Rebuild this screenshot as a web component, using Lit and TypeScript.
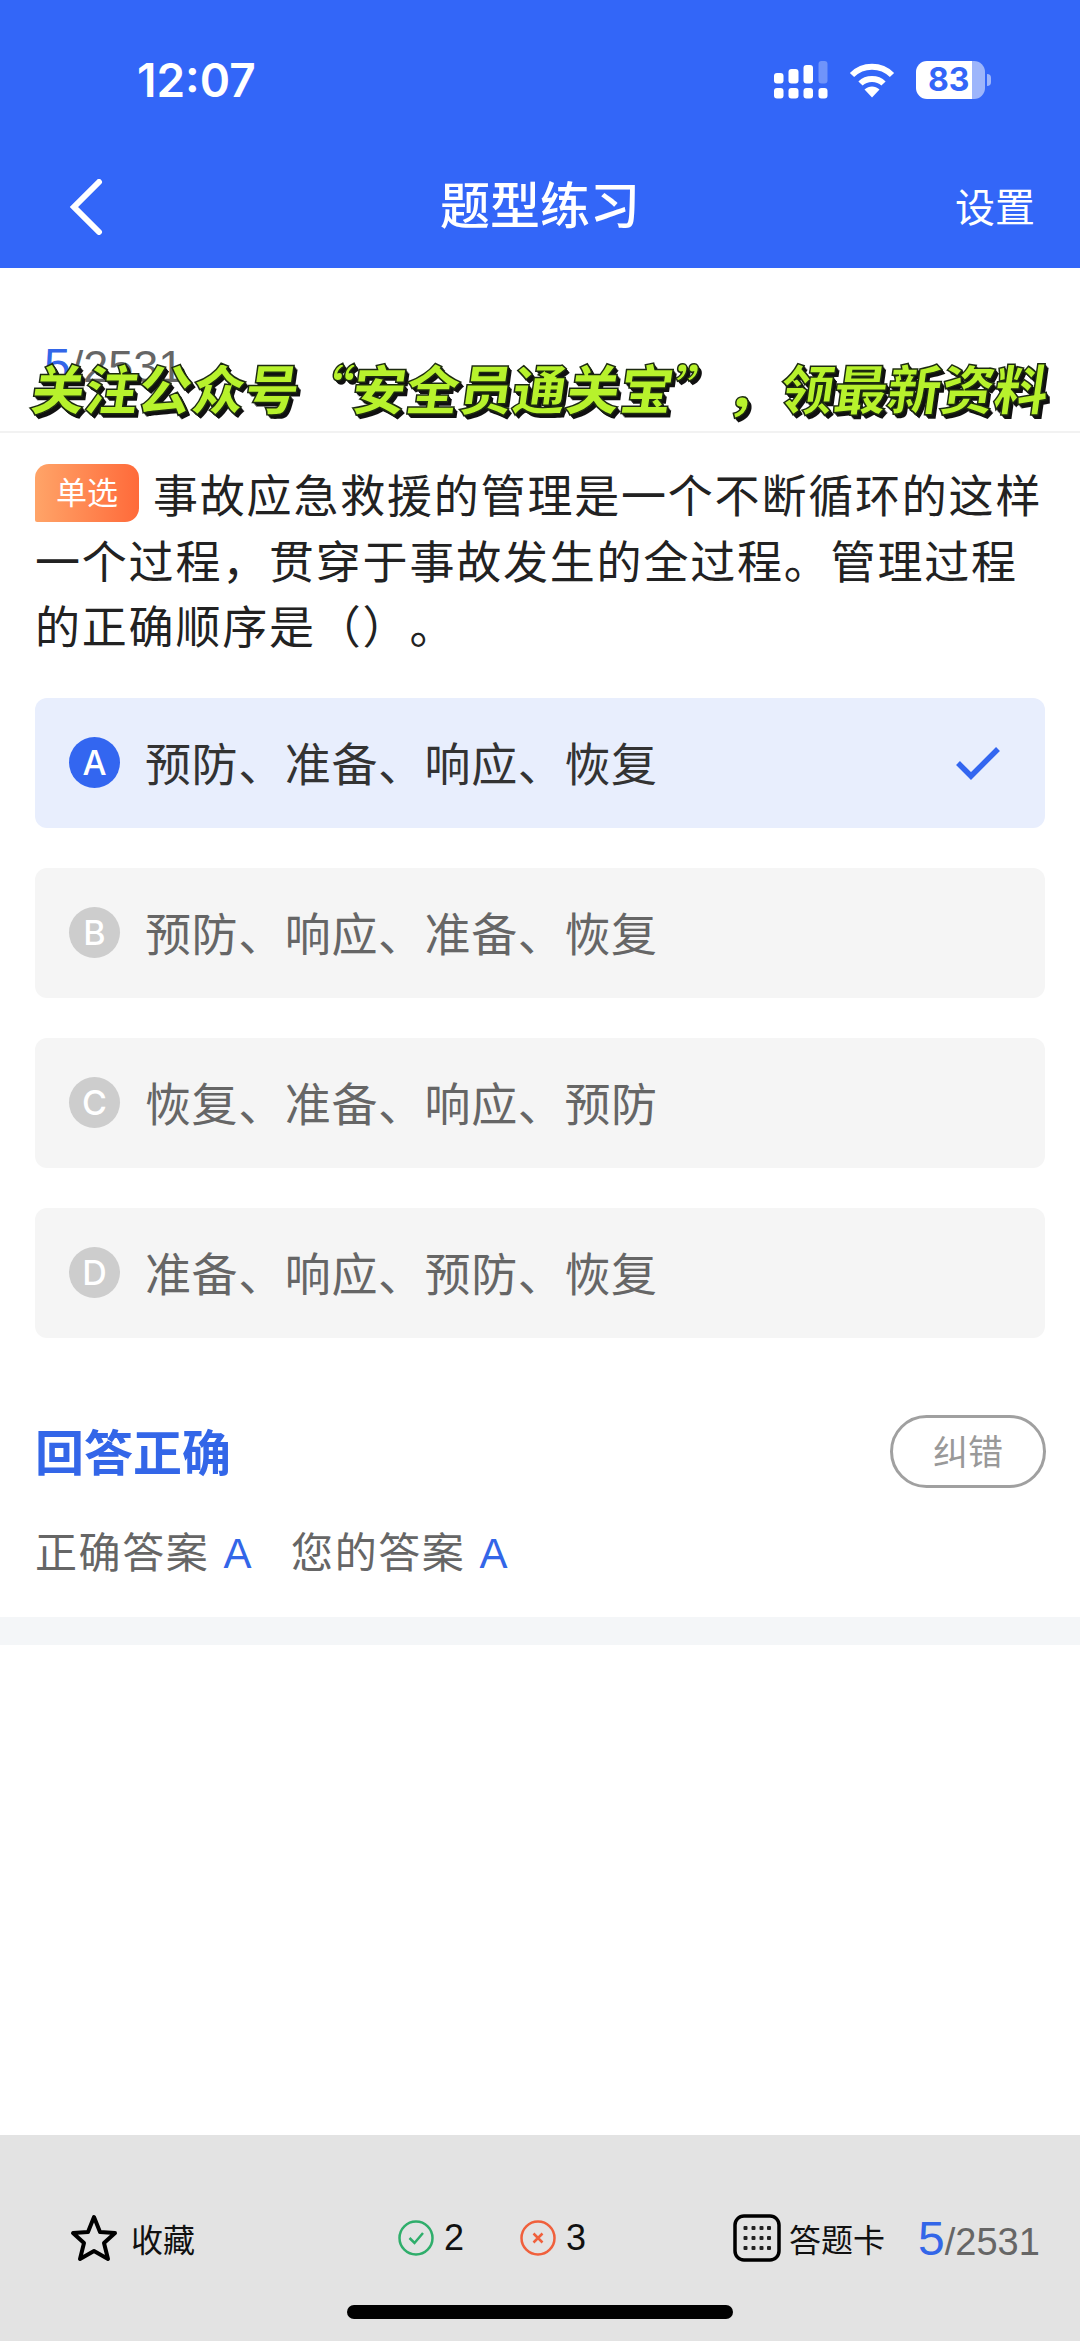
import { LitElement, css, html, svg } from "lit";
import { customElement } from "lit/decorators.js";

const options = [
  { key: "A", text: "预防、准备、响应、恢复", on: true },
  { key: "B", text: "预防、响应、准备、恢复", on: false },
  { key: "C", text: "恢复、准备、响应、预防", on: false },
  { key: "D", text: "准备、响应、预防、恢复", on: false },
];

const signal = svg`<svg class="sig" width="54" height="38" viewBox="0 0 54 38">
  <rect x="0" y="12" width="9.5" height="10.5" rx="3" fill="#fff"/>
  <rect x="14.5" y="8" width="10" height="14.5" rx="3" fill="#fff"/>
  <rect x="29.5" y="4" width="9.5" height="18.5" rx="3" fill="#fff"/>
  <rect x="44.5" y="0" width="9" height="22.5" rx="3" fill="#fff" fill-opacity=".3"/>
  <rect x="0" y="27" width="9.5" height="10.5" rx="3" fill="#fff"/>
  <rect x="14.5" y="27" width="10" height="10.5" rx="3" fill="#fff"/>
  <rect x="29.5" y="27" width="9.5" height="10.5" rx="3" fill="#fff"/>
  <rect x="44.5" y="27" width="9" height="10.5" rx="3" fill="#fff"/>
</svg>`;

const wifi = svg`<svg width="46" height="36" viewBox="0 0 46 36" fill="none" stroke="#fff" stroke-width="6">
  <path d="M3 13C14 2 32 2 43 13"/>
  <path d="M11.5 21.5C17.5 15.5 28.5 15.5 34.5 21.5"/>
  <path d="M15.5 27.5L23 35.5L30.5 27.5C26 23.5 20 23.5 15.5 27.5Z" fill="#fff" stroke="none"/>
</svg>`;

@customElement("app-root")
export class AppRoot extends LitElement {
  render() {
    return html`
      <header class="top">
        <div class="status">
          <span class="time">12:07</span>
          <div class="status-icons">
            ${signal} ${wifi}
            <div class="battery"><span>83</span></div>
            <i class="nub"></i>
          </div>
        </div>
        <nav class="nav">
          <svg class="back" width="36" height="56" viewBox="0 0 36 56" fill="none" stroke="#fff" stroke-width="6" stroke-linecap="round">
            <path d="M31 3L6 28L31 53"/>
          </svg>
          <span class="title">题型练习</span>
          <span class="settings">设置</span>
        </nav>
      </header>

      <section class="progress">
        <span class="count head"><b>5</b>/2531</span>
        <div class="banner">关注公众号“安全员通关宝”，领最新资料</div>
      </section>

      <main class="body">
        <p class="question">
          <span class="tag">单选</span>事故应急救援的管理是一个不断循环的这样一个过程，贯穿于事故发生的全过程。管理过程的正确顺序是（）。
        </p>
        <div class="options">
          ${options.map(
            (o) => html`
              <div class="option ${o.on ? "on" : ""}">
                <span class="letter">${o.key}</span>
                <span class="opt-text">${o.text}</span>
                ${o.on
                  ? html`<svg class="tick" width="46" height="36" viewBox="0 0 46 36" fill="none" stroke="#3366f0" stroke-width="5.5">
                      <path d="M3 18L16 31L43 4"/>
                    </svg>`
                  : ""}
              </div>
            `
          )}
        </div>
        <div class="result">
          <span class="verdict">回答正确</span>
          <span class="report">纠错</span>
        </div>
        <div class="answers">
          <span>正确答案 <em>A</em></span>
          <span>您的答案 <em>A</em></span>
        </div>
      </main>
      <div class="band"></div>
      <div class="spacer"></div>

      <footer class="bottom">
        <div class="tools">
          <div class="fav">
            <svg width="48" height="48" viewBox="0 0 48 48" fill="none" stroke="#000" stroke-width="4" stroke-linejoin="round">
              <path d="M24 3L30 18L45 19L34 29L38 45L24 37L10 45L14 29L3 19L18 18Z"/>
            </svg>
            <span>收藏</span>
          </div>
          <div class="score">
            <svg width="36" height="36" viewBox="0 0 36 36" fill="none" stroke="#2fae6b" stroke-width="2.5">
              <circle cx="18" cy="18" r="16.5"/>
              <path d="M11.5 18L16.5 23L25 13"/>
            </svg>
            <span>2</span>
          </div>
          <div class="score wrong">
            <svg width="36" height="36" viewBox="0 0 36 36" fill="none" stroke="#f0603c" stroke-width="2.5">
              <circle cx="18" cy="18" r="16.5"/>
              <path d="M13.5 13.5L22.5 22.5M22.5 13.5L13.5 22.5"/>
            </svg>
            <span>3</span>
          </div>
          <div class="card">
            <svg width="48" height="48" viewBox="0 0 48 48" fill="none">
              <rect x="2" y="2" width="44" height="44" rx="9" stroke="#000" stroke-width="3.5"/>
              <g fill="#222">
                ${[14, 24, 34].map((y) =>
                  [12.5, 20.5, 28.5, 36].map((x) => svg`<rect x=${x - 2} y=${y - 2} width="4" height="4" rx="1"/>`)
                )}
              </g>
            </svg>
            <span>答题卡</span>
          </div>
          <span class="count foot"><b>5</b>/2531</span>
        </div>
        <div class="home"></div>
      </footer>
    `;
  }

  static styles = css`
    :host {
      display: flex;
      flex-direction: column;
      width: 1080px;
      height: 2341px;
      background: #fff;
      font-family: "Noto Sans CJK SC", "Noto Sans", sans-serif;
      overflow: hidden;
      text-spacing-trim: space-all;
    }
    .top {
      height: 268px;
      background: #3366f8;
      color: #fff;
      box-sizing: border-box;
      padding-top: 50px;
      flex: none;
    }
    .status {
      height: 60px;
      display: flex;
      align-items: center;
      justify-content: space-between;
      padding: 0 89px 0 137px;
    }
    .time {
      font-family: Inter, sans-serif;
      font-weight: 600;
      font-size: 46px;
    }
    .status-icons {
      display: flex;
      align-items: center;
      gap: 21px;
    }
    .battery {
      width: 69px;
      height: 38px;
      border-radius: 11px;
      background: linear-gradient(90deg, #fff 81%, #9db5fb 81%);
      color: #3366f8;
      font-family: Inter, sans-serif;
      font-weight: 700;
      font-size: 32px;
      line-height: 38px;
      padding-left: 12px;
      box-sizing: border-box;
    }
    .nub {
      width: 4px;
      height: 12px;
      border-radius: 0 4px 4px 0;
      background: #9db5fb;
      margin-left: -19px;
    }
    .nav {
      height: 90px;
      margin-top: 50px;
      display: grid;
      grid-template-columns: 1fr auto 1fr;
      align-items: center;
      padding: 0 45px;
    }
    .back {
      margin: 3px 0 0 23px;
    }
    .title {
      font-size: 50px;
      font-weight: 500;
      margin-bottom: 6px;
    }
    .settings {
      justify-self: end;
      font-size: 40px;
    }
    .progress {
      position: relative;
      flex: none;
      height: 165px;
      box-sizing: border-box;
      border-bottom: 2px solid #f2f2f2;
      padding: 70px 0 0 44px;
    }
    .count {
      font-family: "Liberation Sans", sans-serif;
      font-size: 37px;
      color: #666;
    }
    .count.head {
      font-size: 45px;
    }
    .count b {
      font-weight: 400;
      font-size: 48px;
      color: #3366e8;
    }
    .banner {
      position: absolute;
      left: 32px;
      top: 87px;
      white-space: nowrap;
      font-size: 54px;
      letter-spacing: -0.5px;
      line-height: 64px;
      font-weight: 900;
      transform: skewX(-8deg);
      color: #b7f22c;
      -webkit-text-stroke: 1.5px #1c2a10;
      text-shadow: 1px 1px 0 #111, 2px 2px 0 #111, 3px 3px 0 #111, 4px 4px 0 #111;
    }
    .body {
      padding: 0 35px;
      flex: none;
    }
    .question {
      margin: 28px 0 0;
      font-size: 45px;
      line-height: 65.5px;
      letter-spacing: 1.8px;
      color: #222;
    }
    .tag {
      display: inline-block;
      width: 104px;
      height: 58px;
      line-height: 54px;
      margin-right: 14px;
      text-align: center;
      vertical-align: 9px;
      border-radius: 14px 14px 14px 2px;
      background: linear-gradient(90deg, #ffa468, #ff6a3a);
      color: #fff;
      font-size: 31px;
      letter-spacing: 0;
    }
    .options {
      display: flex;
      flex-direction: column;
      gap: 40px;
      margin-top: 40px;
    }
    .option {
      height: 130px;
      display: flex;
      align-items: center;
      padding: 0 34px;
      border-radius: 12px;
      background: #f5f5f5;
      color: #666;
    }
    .option.on {
      background: #e8eefd;
      color: #333;
    }
    .letter {
      width: 51px;
      height: 51px;
      flex: none;
      border-radius: 50%;
      background: #cdcdcd;
      color: #fff;
      text-align: center;
      line-height: 51px;
      font-family: Inter, sans-serif;
      font-weight: 500;
      font-size: 34px;
    }
    .on .letter {
      background: #3366f0;
    }
    .opt-text {
      margin: 0 0 3px 25px;
      font-size: 46px;
      letter-spacing: 0.6px;
      flex: 1;
    }
    .tick {
      margin-right: 10px;
    }
    .result {
      display: flex;
      align-items: center;
      justify-content: space-between;
      margin-top: 76px;
    }
    .verdict {
      font-size: 49px;
      font-weight: 700;
      color: #3366e8;
      margin-bottom: 4px;
    }
    .report {
      width: 156px;
      height: 73px;
      box-sizing: border-box;
      border: 3px solid #a0a0a0;
      border-radius: 37px;
      text-align: center;
      line-height: 64px;
      font-size: 35px;
      color: #999;
      margin-right: -1px;
    }
    .answers {
      display: flex;
      gap: 38px;
      margin-top: 30px;
      font-size: 42px;
      letter-spacing: 1.6px;
      color: #666;
    }
    .answers em {
      font-style: normal;
      font-family: "Liberation Sans", sans-serif;
      color: #3366e8;
      margin-left: 3px;
    }
    .band {
      flex: none;
      height: 28px;
      margin-top: 37px;
      background: #f4f6f8;
    }
    .spacer {
      flex: 1;
    }
    .bottom {
      flex: none;
      height: 206px;
      background: #e3e3e3;
      display: flex;
      flex-direction: column;
      align-items: center;
    }
    .tools {
      align-self: stretch;
      height: 170px;
      box-sizing: border-box;
      padding: 36px 38px 0 70px;
      display: flex;
      align-items: center;
      font-size: 32px;
      color: #111;
      white-space: nowrap;
    }
    .fav,
    .score,
    .card {
      display: flex;
      align-items: center;
    }
    .fav span {
      margin-left: 13px;
    }
    .score {
      margin-left: 203px;
      gap: 10px;
      font-family: "Liberation Sans", sans-serif;
      font-size: 36px;
    }
    .score.wrong {
      margin-left: 56px;
    }
    .card {
      margin-left: 147px;
      gap: 8px;
    }
    .count.foot {
      margin-left: 33px;
      font-size: 38px;
    }
    .home {
      width: 386px;
      height: 14px;
      border-radius: 7px;
      background: #000;
    }
    svg {
      flex: none;
      display: block;
    }
  `;
}

declare global {
  interface HTMLElementTagNameMap {
    "app-root": AppRoot;
  }
}
